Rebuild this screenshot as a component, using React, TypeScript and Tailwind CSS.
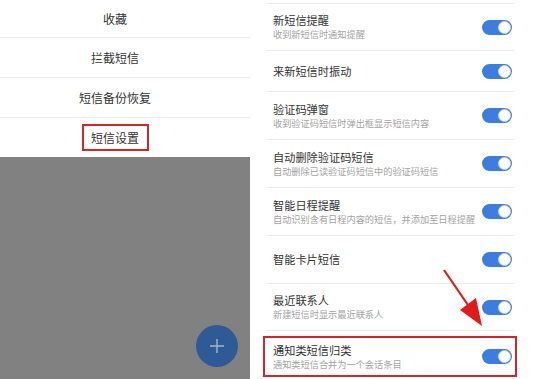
import React from 'react'

type Row = { title: string; sub?: string; h: string; mark?: boolean }

const menu = ['收藏', '拦截短信', '短信备份恢复', '短信设置']

const rows: Row[] = [
  { title: '新短信提醒', sub: '收到新短信时通知提醒', h: 'h-[47px]' },
  { title: '来新短信时振动', h: 'h-[41px]' },
  { title: '验证码弹窗', sub: '收到验证码短信时弹出框显示短信内容', h: 'h-[48px]' },
  { title: '自动删除验证码短信', sub: '自动删除已读验证码短信中的验证码短信', h: 'h-[48px]' },
  { title: '智能日程提醒', sub: '自动识别含有日程内容的短信，并添加至日程提醒', h: 'h-[48px]' },
  { title: '智能卡片短信', h: 'h-[48px]' },
  { title: '最近联系人', sub: '新建短信时显示最近联系人', h: 'h-[47px]' },
  { title: '通知类短信归类', sub: '通知类短信合并为一个会话条目', h: 'h-[47px]', mark: true },
]

function Toggle() {
  return (
    <div className="flex h-[15px] w-[30px] shrink-0 items-center justify-end rounded-full bg-[#3b7ee0] pr-[1px]">
      <div className="h-[13px] w-[13px] rounded-full border border-[#c9d3e0] bg-white" />
    </div>
  )
}

export default function App() {
  return (
    <div
      className="relative flex h-[379px] w-[536px] overflow-hidden bg-white"
      style={{ fontFamily: '"Noto Sans CJK SC", "Noto Sans", sans-serif' }}
    >
      {/* left: popup menu over dimmed screen */}
      <div className="flex w-[250px] shrink-0 flex-col">
        <div className="flex flex-col bg-white text-[12px] text-[#333]">
          {menu.map((m, i) => (
            <div
              key={m}
              className={`flex items-center justify-center pr-[20px] ${i === 0 ? 'h-[37px]' : 'h-[40px] border-t border-[#ececec]'}`}
            >
              {m === '短信设置' ? (
                <span className="flex h-[27px] w-[67px] items-center justify-center border-2 border-[#d3262c]">{m}</span>
              ) : (
                <span>{m}</span>
              )}
            </div>
          ))}
        </div>
        <div className="flex flex-1 items-end justify-end bg-[#818181] pb-[12px] pr-[12px]">
          <div className="flex h-[42px] w-[42px] items-center justify-center rounded-full bg-[#2e5a96]">
            <svg width="16" height="16" viewBox="0 0 16 16">
              <path d="M8 1v14M1 8h14" stroke="#a9b6c8" strokeWidth="1.4" />
            </svg>
          </div>
        </div>
      </div>

      {/* right: settings list */}
      <div className="flex min-w-0 flex-1 flex-col pl-[16px] pr-[22px]">
        <div className="h-[3px]" />
        {rows.map((r) => (
          <div key={r.title} className={`${r.h} border-t border-[#ececec] ${r.mark ? 'pt-[5px]' : ''}`}>
            <div
              className={`flex h-full items-center justify-between ${r.mark ? '-mx-[3px] border-2 border-[#d3262c] pl-[8px] pr-[3px]' : 'pl-[7px] pr-[2px]'}`}
            >
              <div className="flex min-w-0 flex-col whitespace-nowrap">
                <span className="text-[11.2px] leading-[15px] text-[#333]">{r.title}</span>
                {r.sub && <span className="text-[9.2px] leading-[13px] text-[#a3a3a3]">{r.sub}</span>}
              </div>
              <Toggle />
            </div>
          </div>
        ))}
      </div>

      {/* red arrow annotation */}
      <svg className="pointer-events-none absolute left-0 top-0" width="536" height="379">
        <line x1="444" y1="270" x2="468" y2="305" stroke="#e01b1b" strokeWidth="2.2" />
        <polygon points="482,326 460,310 476,298" fill="#e01b1b" />
      </svg>
    </div>
  )
}
